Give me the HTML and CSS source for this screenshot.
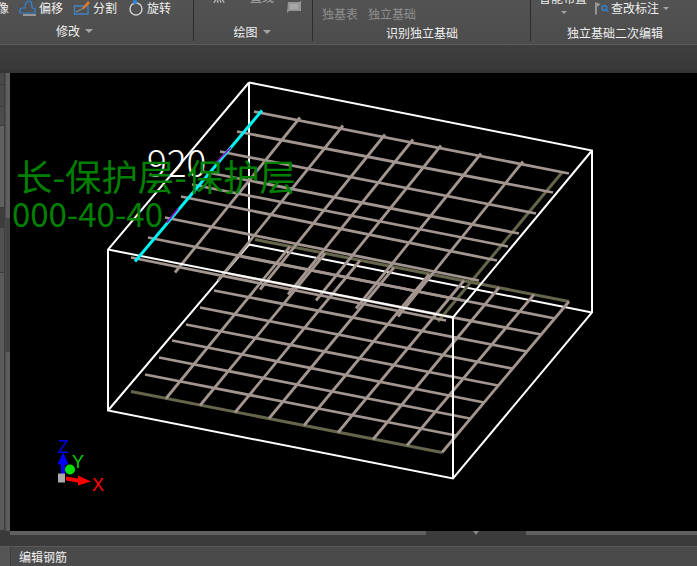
FILE: index.html
```html
<!DOCTYPE html>
<html lang="zh">
<head>
<meta charset="utf-8">
<title>编辑钢筋</title>
<link rel="stylesheet" href="styles.css">
</head>
<body>
<header class="ribbon">
  <section class="group group-edit">
    <div class="tools tools-edit">
      <span class="tool tool-cut">像</span>
      <span class="tool">
        <svg class="icon" viewBox="0 0 18 16"><path d="M1 13 V10 Q1 8 4 8 H6 L7 3 Q8 1 10 1 Q12 1 12.500 3 L13 7 Q13.500 9 16 9 V13 Z" fill="none" stroke="#2f86d8" stroke-width="1.200"/><path d="M4 15 H17" stroke="#ddd" stroke-width="1"/></svg>
        偏移</span>
      <span class="tool">
        <svg class="icon" viewBox="0 0 18 16"><path d="M1.500 6 H15 V14 H1.500 Z" fill="none" stroke="#3f82c8" stroke-width="1.300"/><path d="M3 12 L11 8" stroke="#999" stroke-width="1"/><path d="M9 8 L15 1 L17 3 L11 9 Z" fill="#e07a26"/></svg>
        分割</span>
      <span class="tool">
        <svg class="icon" viewBox="0 0 16 16"><circle cx="8" cy="9" r="6" fill="none" stroke="#cfcfcf" stroke-width="1.400"/><circle cx="7" cy="2" r="2.200" fill="#2f86d8"/></svg>
        旋转</span>
    </div>
    <div class="group-label label-edit">修改<i class="caret"></i></div>
  </section>
  <section class="group group-draw">
    <div class="tools tools-draw">
      <span class="clipped clipped-point">点</span>
      <span class="clipped clipped-line">直线</span>
      <svg class="rect-icon" viewBox="0 0 16 14"><path d="M2 2 H13 L15 1 V11 H3 L1 13 Z" fill="#9a9a9a"/><path d="M3 3 H13 V10 H3 Z" fill="#a8a8a8" stroke="#8a8a8a"/></svg>
    </div>
    <div class="group-label label-draw">绘图<i class="caret"></i></div>
  </section>
  <section class="group group-detect">
    <div class="tools tools-detect">
      <span class="muted">独基表</span>
      <span class="muted">独立基础</span>
    </div>
    <div class="group-label label-detect">识别独立基础</div>
  </section>
  <section class="group group-second">
    <div class="tools tools-second">
      <span class="smart">智能布置<i class="caret caret-small caret-below"></i></span>
      <span class="tool tool-mark">
        <svg class="icon icon-mark" viewBox="0 0 16 14"><path d="M1 1 V14" stroke="#9a9a9a" stroke-width="2"/><path d="M2 1 L6 3 L2 6 Z" fill="#9a9a9a"/><circle cx="10" cy="7" r="2.600" fill="none" stroke="#2f86d8" stroke-width="1.400"/><path d="M12 9 L14 11" stroke="#2f86d8" stroke-width="1.400"/></svg>
        查改标注<i class="caret caret-small"></i></span>
    </div>
    <div class="group-label label-second">独立基础二次编辑</div>
  </section>
</header>
<div class="tabband"></div>
<main class="workspace">
  <aside class="sidebar">
    <div class="side-panels">
      <div class="side-cell cell-a"></div>
      <div class="side-cell cell-b"></div>
      <div class="side-cell cell-c"></div>
      <div class="side-cell cell-d"></div>
      <div class="side-cell cell-e"></div>
      <div class="side-cell cell-f"></div>
      <div class="side-cell cell-g"></div>
    </div>
    <div class="side-scroll">
      <div class="thumb"></div>
    </div>
  </aside>
  <svg class="view" viewBox="10 74 687 457" aria-label="三维钢筋视图">
    <defs>
      <clipPath id="labelclip"><rect x="13" y="74" width="684" height="457"/></clipPath>
    </defs>
    <path class="edge" d="M249 83 V245 M249 245 L592 313 M108 411 L249 245"/>
    <path class="bar-olive" d="M131 392 L442 453 M255 240 L569 302"/>
    <path class="bar" d="M145 375 L456 436 M159 358 L470 419 M172 341 L484 403 M186 325 L498 386 M200 308 L512 369 M214 291 L527 352 M228 274 L541 335 M241 257 L555 319"/>
    <path class="bar" d="M166 399 L290 247 M200 406 L325 254 M235 413 L360 261 M269 419 L394 268 M304 426 L429 275 M338 433 L464 281 M373 440 L499 288 M407 446 L534 295 M442 453 L569 302"/>
    <path class="bar-olive" d="M562 173 L438 322"/>
    <path class="bar" d="M254 112 L569 174 M237 132 L553 193 M220 152 L536 214 M203 172 L519 234 M192 185 L508 247 M181 197 L497 261 M165 218 L479 281 M148 238 L463 301 M131 258 L446 321"/>
    <path class="bar" d="M300 118 L175 273 M343 126 L218 281 M385 135 L260 290 M413 140 L288 295 M441 146 L316 301 M481 154 L356 309 M523 162 L398 317"/>
    <path class="edge" d="M249 83 L592 151 V313 L453 479 L108 411 V250 L249 83 M108 250 L453 318 L592 151 M453 318 V479"/>
    <path class="cyan" d="M262 111 L135 262"/>
    <path class="purple" d="M216 163 L231 148 M167 223 L178 209"/>
    <text class="dim" x="147" y="177">920</text>
    <g clip-path="url(#labelclip)">
      <text class="note" x="16" y="191">长-保护层-保护层</text>
      <text class="note note-num" x="163" y="227">2000-40-40</text>
    </g>
    <g class="gizmo">
      <path class="axis-z" d="M63 475 V460"/>
      <path class="axis-zh" d="M63 453 L68.500 465 H57.500 Z"/>
      <circle class="axis-y" cx="70" cy="470" r="5"/>
      <rect class="axis-o" x="58" y="474" width="7" height="9"/>
      <path class="axis-x" d="M66 477 L78 479 V476 L91 482 L78 486 V483 L66 481 Z"/>
      <text class="axis-label label-z" x="58" y="453">Z</text>
      <text class="axis-label label-y" x="72" y="468">Y</text>
      <text class="axis-label label-x" x="92" y="491">X</text>
    </g>
  </svg>
</main>
<div class="hscroll">
  <div class="hthumb"><i class="hthumb-arrow"></i></div>
</div>
<div class="hband"></div>
<footer class="panel">
  <div class="panel-side"></div>
  <div class="panel-title">编辑钢筋</div>
</footer>
</body>
</html>
```
FILE: styles.css
```css
* { box-sizing: border-box; }
html, body { margin: 0; padding: 0; }
body {
  width: 697px;
  height: 566px;
  overflow: hidden;
  background: #3a3a3a;
  font-family: "Noto Sans CJK SC", "Noto Sans", sans-serif;
  font-size: 12px;
  color: #f0f0f0;
  display: flex;
  flex-direction: column;
}
.ribbon {
  height: 45px;
  flex: none;
  display: flex;
  overflow: hidden;
  background: linear-gradient(#535353, #4c4c4c);
  border-bottom: 1px solid #5a5a5a;
}
.group {
  height: 41px;
  display: flex;
  flex-direction: column;
  justify-content: space-between;
  border-right: 1px solid #2d2d2d;
  flex: none;
}
.group-edit { width: 194px; }
.group-draw { width: 119px; }
.group-detect { width: 218px; }
.group-second { flex: 1; border-right: 0; }
.tools { display: flex; height: 18px; line-height: 16px; white-space: nowrap; }
.tool { display: flex; align-items: center; gap: 2px; height: 16px; }
.tools-edit { gap: 10px; margin-left: -3px; }
.icon { width: 18px; height: 16px; flex: none; }
.group-label { height: 16px; line-height: 16px; text-align: center; display: flex; align-items: center; justify-content: center; gap: 5px; }
.label-edit { margin-right: 44px; margin-bottom: 2px; }
.label-draw { margin-right: 2px; margin-bottom: 1px; }
.label-detect { padding-left: 1px; }
.label-second { padding-left: 2px; }
.caret { display: inline-block; width: 0; height: 0; border-left: 4px solid transparent; border-right: 4px solid transparent; border-top: 4px solid #a5a5a5; }
.caret-small { border-left-width: 3px; border-right-width: 3px; border-top-width: 3px; margin-left: 3px; }
.tools-draw { padding-left: 19px; gap: 25px; align-items: flex-start; }
.clipped { color: #ddd; margin-top: -11px; }
.clipped-line { color: #aaa; }
.rect-icon { width: 16px; height: 14px; flex: none; margin-left: -13px; margin-top: 0; }
.tools-detect { gap: 10px; margin-top: 6px; padding-left: 9px; height: 16px; }
.muted { color: #8f8f8f; }
.tools-second { padding-left: 8px; }
.smart { position: relative; color: #eee; margin-top: -10px; width: 56px; }
.caret-below { position: absolute; left: 22px; top: 21px; margin: 0; }
.tool-mark { gap: 1px; }
.icon-mark { width: 15px; height: 14px; }
.tabband { height: 28px; flex: none; background: linear-gradient(#3f3f3f, #393939 85%, #333); }
.workspace { height: 458px; flex: none; display: flex; }
.sidebar { width: 10px; flex: none; display: flex; background: #555; }
.side-panels { width: 5px; flex: none; display: flex; flex-direction: column; border-right: 1px solid #3e3e3e; }
.side-cell { border-bottom: 1px solid #3c3c3c; background: #585858; }
.cell-a { height: 12px; background: #484848; }
.cell-b { height: 22px; background: #4a4a4a; }
.cell-c { height: 19px; background: #4c4c4c; }
.cell-d { height: 82px; background: #606060; }
.cell-e { height: 20px; background: #3d3d3d; }
.cell-f { height: 45px; background: #505050; }
.cell-g { flex: 1; background: #5a5a5a; }
.side-scroll { width: 5px; flex: none; background: #5c5c5c; border-left: 1px solid #4a4a4a; }
.thumb { height: 279px; background: linear-gradient(#5f5f5f 0 52%, #444 52%); }
.view { flex: 1; min-width: 0; height: 458px; display: block; background: #000; font-family: "Noto Sans CJK SC", "Noto Sans", sans-serif; }
.edge { fill: none; stroke: #fff; stroke-width: 2; }
.bar { fill: none; stroke: #a3958f; stroke-width: 2.800; }
.bar-olive { fill: none; stroke: #65654b; stroke-width: 3; }
.cyan { fill: none; stroke: #00f4f4; stroke-width: 3; }
.purple { fill: none; stroke: #a000c8; stroke-width: 1.500; }
.dim { fill: #fff; font-size: 37px; font-weight: 300; }
.note { fill: #008000; font-size: 36.400px; }
.note-num { font-size: 33px; text-anchor: end; }
.axis-z { stroke: #0000ff; stroke-width: 4; }
.axis-zh { fill: #0000ff; }
.axis-y { fill: #00e000; }
.axis-o { fill: #aaa; }
.axis-x { fill: #ff0000; }
.axis-label { font-family: "Liberation Sans Narrow", "Liberation Sans", sans-serif; font-size: 18px; }
.label-z { fill: #0000e0; }
.label-y { fill: #00d000; }
.label-x { fill: #ff0000; }
.hscroll { height: 4px; flex: none; margin-left: 10px; background: #606060; padding-left: 416px; }
.hthumb { width: 100px; height: 4px; background: #3c3c3c; display: flex; justify-content: center; }
.hthumb-arrow { width: 0; height: 0; border-left: 3px solid transparent; border-right: 3px solid transparent; border-top: 4px solid #8a8a8a; }
.hband { height: 11px; flex: none; margin-left: 10px; background: #3b3b3b; }
.panel { height: 20px; flex: none; display: flex; background: #4a4a4a; border-top: 1px solid #5a5a5a; }
.panel-side { width: 11px; flex: none; background: #555; border-right: 1px solid #3e3e3e; }
.panel-title { padding-left: 8px; line-height: 19px; font-size: 12px; color: #f2f2f2; }
```
